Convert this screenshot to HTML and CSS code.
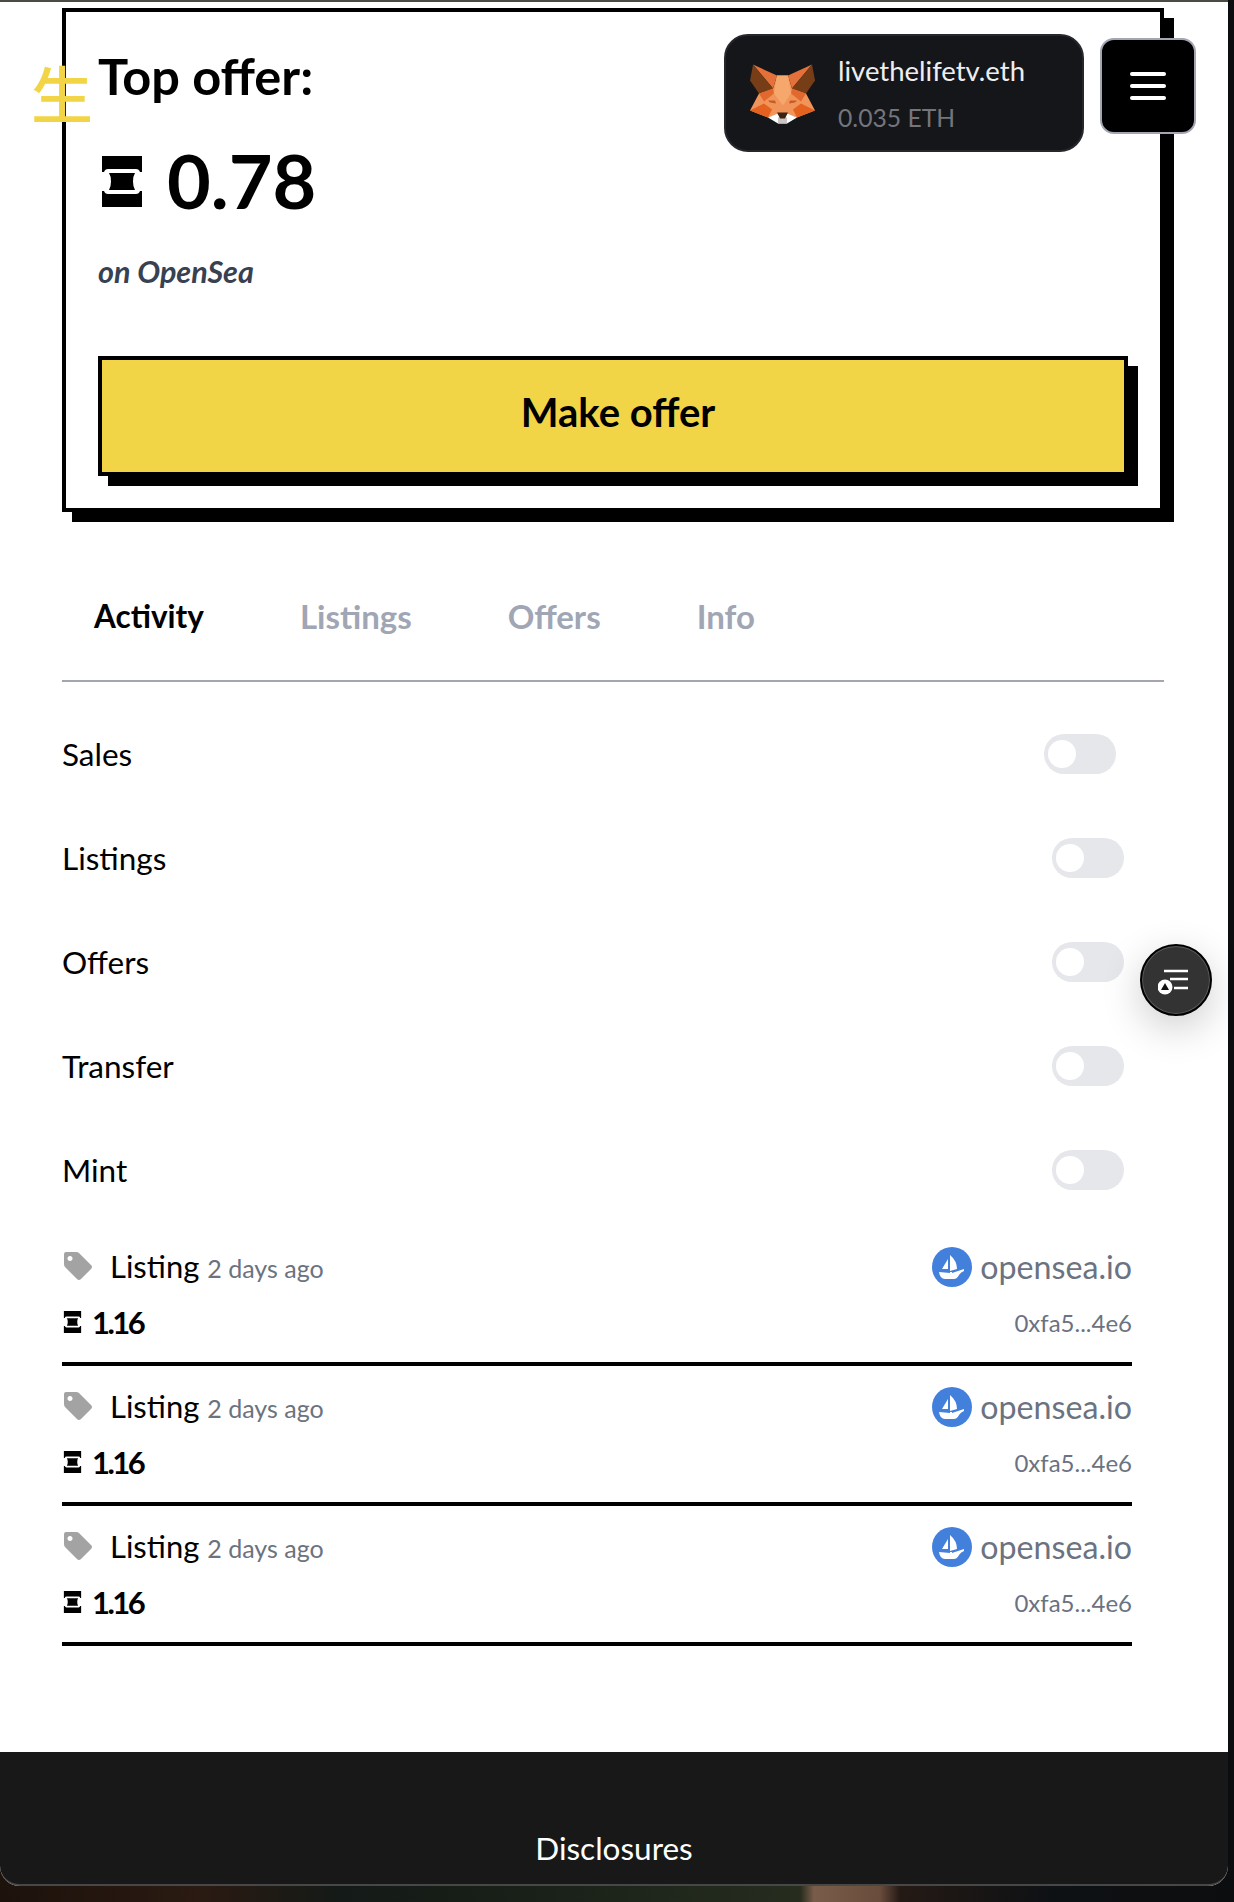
FILE: index.html
```html
<!DOCTYPE html>
<html lang="en">
<head>
    <meta charset="UTF-8">
    <meta name="viewport" content="width=device-width, initial-scale=1.0">
    <title>Top offer</title>
    <link rel="stylesheet" href="styles.css">
</head>
<body>
    <svg class="defs" width="0" height="0" aria-hidden="true">
        <symbol id="eth" viewBox="0 0 40 51">
            <path d="M0 0h40v16h-2q-1-3-4-3H6q-3 0-4 3H0z"/>
            <path d="M7 17h26q-2 3-2 8.500t2 8.500H7q2-3 2-8.500T7 17z"/>
            <path d="M0 51h40V35h-2q-1 3-4 3H6q-3 0-4-3H0z"/>
        </symbol>
        <symbol id="tag" viewBox="0 0 28 28">
            <path fill-rule="evenodd" d="M2 0h10q2 0 3 1l12 12q2 2 0 4L17 27q-2 2-4 0L1 15q-1-1-1-3V2q0-2 2-2zm4 4a2.500 2.500 0 1 0 .01 0z"/>
        </symbol>
        <symbol id="ship" viewBox="0 0 40 40">
            <circle cx="20" cy="20" r="20" fill="#4380dc"/>
            <path fill="#fff" d="M16 12l-6 10h6z"/>
            <path fill="#fff" d="M18 8q7 6 7 14l-7 2z"/>
            <path fill="#fff" d="M7 25l11 1v-1h2v1l12-4v2q-3 1-5 4-2 4-5 4H13q-5 0-6-7z"/>
        </symbol>
    </svg>

    <div class="sheet">
        <!-- barra fija encima de la tarjeta -->
        <div class="nav">
            <div class="wallet">
                <svg class="fox" viewBox="0 0 65 60">
                    <polygon fill="#f0945a" points="9,30 23,25 27,12 38,12 42,25 56,30 65,47 47,54 33,50 18,54 0,47"/>
                    <polygon fill="#e4703a" points="3,1 27,12 23,25"/>
                    <polygon fill="#e4703a" points="62,1 38,12 42,25"/>
                    <polygon fill="#763d16" points="3,1 23,25 9,30 0,17"/>
                    <polygon fill="#763d16" points="62,1 42,25 56,30 65,17"/>
                    <polygon fill="#f6a76c" points="27,12 38,12 41,30 33,42 24,30"/>
                    <polygon fill="#e2682d" points="9,30 23,25 24,30 14,38"/>
                    <polygon fill="#e2682d" points="56,30 42,25 41,30 51,38"/>
                    <polygon fill="#e4611f" points="0,47 14,40 22,46 18,54"/>
                    <polygon fill="#e4611f" points="65,47 51,40 43,46 47,54"/>
                    <polygon fill="#c85a26" points="18,37 25,37 26,40 20,39"/>
                    <polygon fill="#c85a26" points="47,37 40,37 39,40 45,39"/>
                    <polygon fill="#fff" points="18,54 28,50 37,50 47,54 37,60 28,60"/>
                    <polygon fill="#c9c5c2" points="28,54 37,54 37,60 28,60"/>
                    <polygon fill="#3b2314" points="27,49 38,49 35,55 30,55"/>
                </svg>
                <div class="wallet-info">
                    <div class="wallet-name">livethelifetv.eth</div>
                    <div class="wallet-balance">0.035 ETH</div>
                </div>
            </div>
            <button class="menu-button" aria-label="Menu"><span></span><span></span><span></span></button>
        </div>

        <div class="content">
            <div class="offer-card">
                <span class="kanji">生</span>
                <div class="offer-title">Top offer:</div>
                <div class="offer-price">
                    <svg class="eth-big"><use href="#eth"/></svg>
                    <span class="offer-amount">0.78</span>
                </div>
                <div class="offer-source">on OpenSea</div>
                <button class="offer-button">Make offer</button>
            </div>

            <div class="tabs">
                <div class="tab tab-active">Activity</div>
                <div class="tab">Listings</div>
                <div class="tab">Offers</div>
                <div class="tab">Info</div>
            </div>

            <div class="filters">
                <div class="filter-row"><span>Sales</span><span class="toggle toggle-first"></span></div>
                <div class="filter-row"><span>Listings</span><span class="toggle"></span></div>
                <div class="filter-row"><span>Offers</span><span class="toggle"></span></div>
                <div class="filter-row"><span>Transfer</span><span class="toggle"></span></div>
                <div class="filter-row"><span>Mint</span><span class="toggle"></span></div>
            </div>

            <div class="listings">
                <div class="listing">
                    <div class="listing-line">
                        <div class="listing-kind">
                            <svg class="tag-icon"><use href="#tag"/></svg>
                            <span class="listing-label">Listing</span>
                            <span class="listing-time">2 days ago</span>
                        </div>
                        <div class="listing-market">
                            <svg class="ship-icon"><use href="#ship"/></svg>
                            <span>opensea.io</span>
                        </div>
                    </div>
                    <div class="listing-line listing-second">
                        <div class="listing-price">
                            <svg class="eth-small"><use href="#eth"/></svg>
                            <span>1.16</span>
                        </div>
                        <div class="listing-address">0xfa5...4e6</div>
                    </div>
                </div>
                <div class="listing">
                    <div class="listing-line">
                        <div class="listing-kind">
                            <svg class="tag-icon"><use href="#tag"/></svg>
                            <span class="listing-label">Listing</span>
                            <span class="listing-time">2 days ago</span>
                        </div>
                        <div class="listing-market">
                            <svg class="ship-icon"><use href="#ship"/></svg>
                            <span>opensea.io</span>
                        </div>
                    </div>
                    <div class="listing-line listing-second">
                        <div class="listing-price">
                            <svg class="eth-small"><use href="#eth"/></svg>
                            <span>1.16</span>
                        </div>
                        <div class="listing-address">0xfa5...4e6</div>
                    </div>
                </div>
                <div class="listing">
                    <div class="listing-line">
                        <div class="listing-kind">
                            <svg class="tag-icon"><use href="#tag"/></svg>
                            <span class="listing-label">Listing</span>
                            <span class="listing-time">2 days ago</span>
                        </div>
                        <div class="listing-market">
                            <svg class="ship-icon"><use href="#ship"/></svg>
                            <span>opensea.io</span>
                        </div>
                    </div>
                    <div class="listing-line listing-second">
                        <div class="listing-price">
                            <svg class="eth-small"><use href="#eth"/></svg>
                            <span>1.16</span>
                        </div>
                        <div class="listing-address">0xfa5...4e6</div>
                    </div>
                </div>
            </div>
        </div>

        <div class="footer">Disclosures</div>

        <!-- boton flotante de la derecha -->
        <button class="float-button" aria-label="Activity">
            <svg viewBox="0 0 36 30" width="36" height="30">
                <path d="M6 6h24M12 14h18M16 23h14" stroke="#fff" stroke-width="2.500" fill="none"/>
                <circle cx="7" cy="22" r="7.500" fill="#fff"/>
                <path d="M7 18l4 7h-8z" fill="#111"/>
            </svg>
        </button>
    </div>
</body>
</html>
```

FILE: styles.css
```css
* {
    box-sizing: border-box;
}
body {
    margin: 0;
    height: 1902px;
    overflow: hidden;
    font-family: "Lato", "Noto Sans CJK JP", sans-serif;
    color: #000;
    background: linear-gradient(90deg, #1d120c 0, #2a1a12 200px, #141a17 340px, #182018 520px, #262c1e 800px, #7a5c4a 814px, #6a4c3c 880px, #241a14 900px, #0e1114 1050px, #0c0d0e 1234px);
}
.defs {
    position: absolute;
}
.sheet {
    position: relative;
    width: 1228px;
    height: 1886px;
    border-top: 2px solid #4b4b45;
    border-radius: 0 0 20px 20px;
    background: #fff;
    display: flex;
    flex-direction: column;
}
.content {
    flex: 1;
    padding: 6px 64px 0 62px;
}

/* nav */
.nav {
    position: absolute;
    top: 32px;
    left: 724px;
    display: flex;
    gap: 16px;
    z-index: 2;
}
.wallet {
    width: 360px;
    height: 118px;
    background: #15161a;
    border: 2px solid #26272c;
    border-radius: 24px;
    display: flex;
    align-items: center;
    padding-left: 24px;
    gap: 23px;
}
.fox {
    width: 65px;
    height: 61px;
}
.wallet-info {
    padding-top: 2px;
}
.wallet-name {
    color: #eeeef1;
    font-size: 27.500px;
    line-height: 36px;
}
.wallet-balance {
    color: #74757b;
    font-size: 24.700px;
    line-height: 34px;
    margin-top: 12px;
}
.menu-button {
    width: 96px;
    height: 96px;
    margin-top: 4px;
    background: #000;
    border: 2px solid #a3a6b2;
    border-radius: 14px;
    display: flex;
    flex-direction: column;
    align-items: center;
    justify-content: center;
    gap: 8px;
    padding: 0;
}
.menu-button span {
    width: 36px;
    height: 4px;
    background: #fff;
    border-radius: 2px;
}

/* tarjeta */
.offer-card {
    position: relative;
    height: 504px;
    border: 4px solid #000;
    box-shadow: 10px 10px 0 #000;
    background: #fff;
    padding: 34px 32px 32px;
}
.kanji {
    position: absolute;
    left: -35px;
    top: 42px;
    color: #f2d547;
    font-family: "Noto Sans CJK JP", sans-serif;
    font-size: 62px;
    font-weight: 500;
    line-height: 76px;
}
.offer-title {
    font-size: 50.500px;
    font-weight: 700;
    line-height: 60px;
}
.offer-price {
    display: flex;
    align-items: center;
    height: 70px;
    margin-top: 40px;
    font-size: 75.500px;
    font-weight: 700;
}
.offer-amount {
    margin-bottom: 4px;
}
.eth-big {
    width: 40px;
    height: 51px;
    margin-left: 4px;
    margin-right: 25px;
}
.offer-source {
    margin-top: 39px;
    color: #374151;
    font-size: 30.500px;
    font-style: italic;
    font-weight: 700;
    line-height: 32px;
}
.offer-button {
    display: block;
    width: 1030px;
    height: 120px;
    margin-top: 69px;
    background: #f2d547;
    border: 4px solid #000;
    box-shadow: 10px 10px 0 #000;
    font-family: inherit;
    font-size: 40px;
    font-weight: 700;
    padding: 0 0 8px 10px;
    color: #000;
}

/* tabs */
.tabs {
    display: flex;
    gap: 96px;
    margin-top: 84px;
    padding: 0 0 44px 32px;
    border-bottom: 2px solid #a3a5b0;
}
.tab {
    color: #a0a6b4;
    font-size: 33px;
    font-weight: 700;
    line-height: 40px;
}
.tab-active {
    color: #000;
    font-size: 31.500px;
}

/* filtros */
.filters {
    margin-top: 20px;
}
.filter-row {
    display: flex;
    align-items: center;
    justify-content: space-between;
    height: 104px;
    padding-right: 40px;
    font-size: 31.500px;
}
.toggle {
    position: relative;
    width: 72px;
    height: 40px;
    background: #e5e7eb;
    border-radius: 20px;
}
.toggle::after {
    content: "";
    position: absolute;
    left: 4px;
    top: 6px;
    width: 28px;
    height: 28px;
    background: #fff;
    border-radius: 50%;
}
.toggle-first {
    margin-right: 8px;
}

/* listado */
.listings {
    margin: 4px 32px 0 0;
}
.listing {
    height: 140px;
    padding: 18px 0 24px;
    border-bottom: 4px solid #000;
}
.listing-line {
    display: flex;
    align-items: center;
    justify-content: space-between;
    height: 44px;
}
.listing-second {
    height: 36px;
    margin-top: 16px;
}
.listing-kind {
    display: flex;
    align-items: baseline;
}
.tag-icon {
    width: 28px;
    height: 28px;
    margin: 0 18px 0 2px;
    fill: #a3a3a3;
    align-self: center;
}
.listing-label {
    font-size: 31px;
}
.listing-time {
    margin-left: 8px;
    color: #6b7280;
    font-size: 25px;
}
.listing-market {
    display: flex;
    align-items: center;
    gap: 8px;
    color: #6b7280;
    font-size: 32.200px;
}
.ship-icon {
    width: 40px;
    height: 40px;
    margin-top: 2px;
}
.listing-price {
    display: flex;
    align-items: center;
    font-size: 31px;
    font-weight: 700;
    letter-spacing: -2.500px;
}
.eth-small {
    width: 19px;
    height: 22px;
    margin: 0 10px 0 1px;
}
.listing-address {
    color: #6b7280;
    font-size: 24px;
}

/* pie */
.footer {
    height: 134px;
    padding-top: 79px;
    background: #181818;
    border-bottom: 2px solid #474747;
    border-radius: 0 0 20px 20px;
    color: #fff;
    font-size: 31.500px;
    line-height: 34px;
    text-align: center;
}

/* boton flotante */
.float-button {
    position: absolute;
    left: 1140px;
    top: 942px;
    width: 72px;
    height: 72px;
    padding: 0;
    border-radius: 50%;
    border: 2px solid #000;
    background: #333;
    box-shadow: inset 0 0 0 1px #5c5c5c, 0 12px 40px rgba(0, 0, 0, 0.2);
    display: flex;
    align-items: center;
    justify-content: center;
}
```
